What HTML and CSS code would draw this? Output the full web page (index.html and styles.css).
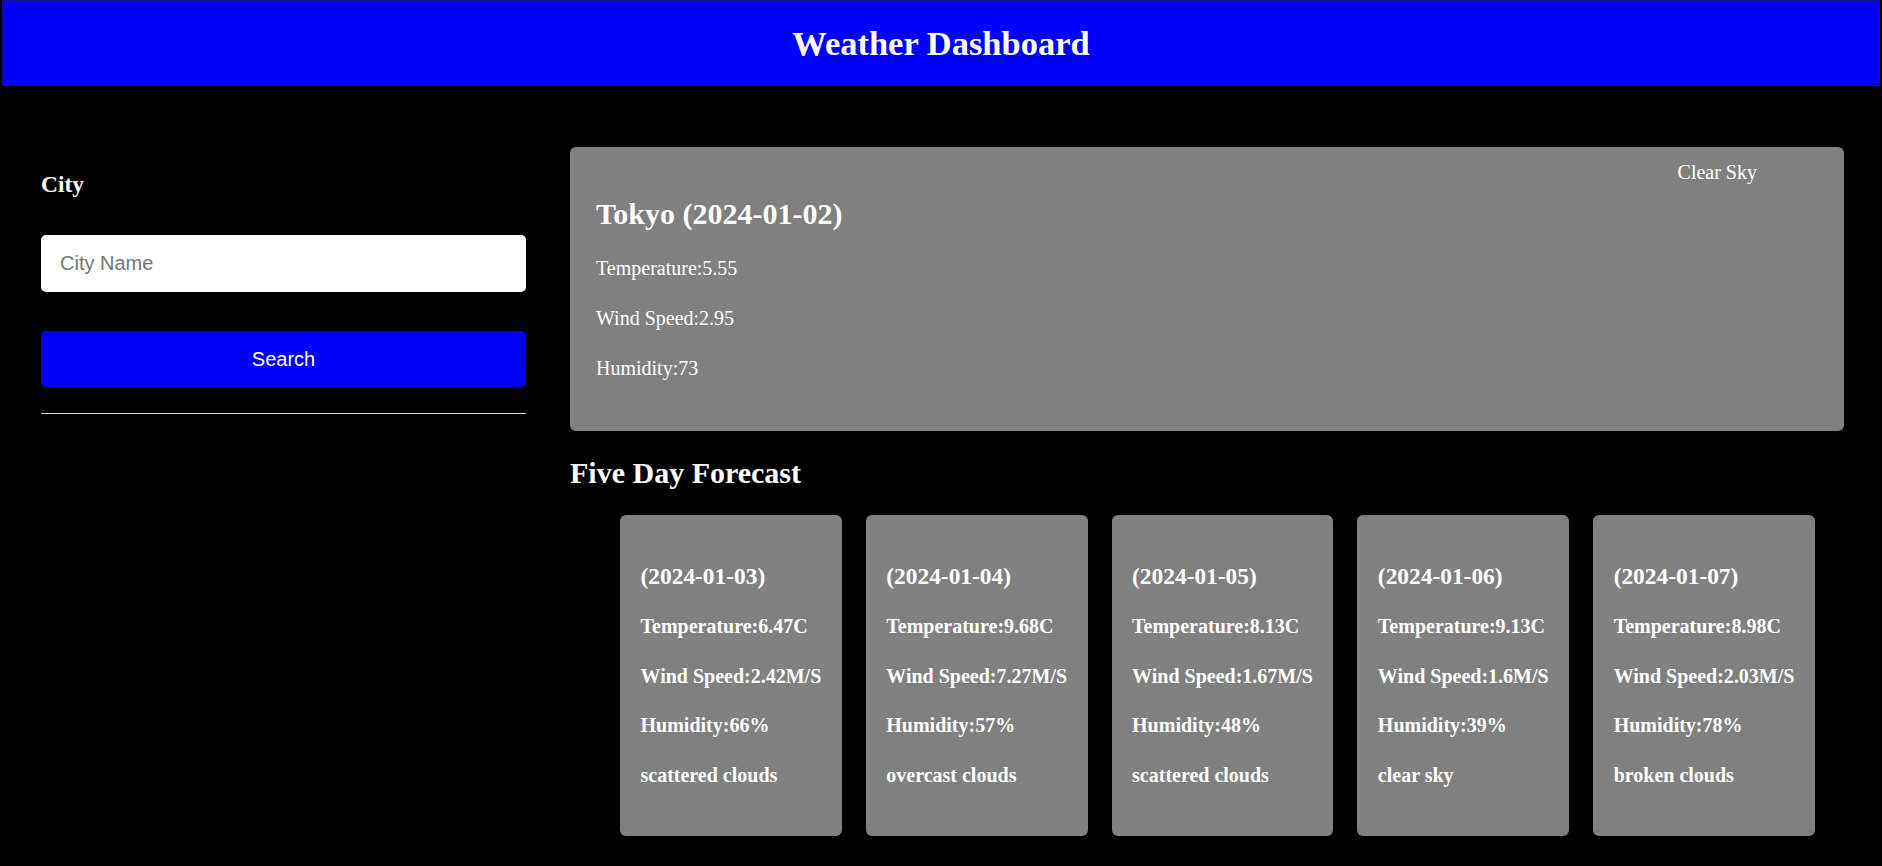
FILE: index.html
```html
<!DOCTYPE html>
<html lang="en">
<head>
<meta charset="utf-8">
<title>Weather Dashboard</title>
<link rel="stylesheet" href="styles.css">
</head>
<body>
<header class="topbar">
  <h1>Weather Dashboard</h1>
</header>
<div class="layout">
  <aside class="sidebar">
    <h3 class="label">City</h3>
    <input class="city-input" type="text" placeholder="City Name">
    <button class="search-btn" type="button">Search</button>
    <hr class="divider">
  </aside>
  <main class="main">
    <section class="current">
      <div class="current-status"><span>Clear Sky</span></div>
      <h2 class="current-title">Tokyo (2024-01-02)</h2>
      <div class="current-stats">
        <p>Temperature:5.55</p>
        <p>Wind Speed:2.95</p>
        <p>Humidity:73</p>
      </div>
    </section>
    <h2 class="forecast-title">Five Day Forecast</h2>
    <ul class="forecast">
      <li class="day">
        <h3>(2024-01-03)</h3>
        <div class="day-stats">
          <p>Temperature:6.47C</p>
          <p>Wind Speed:2.42M/S</p>
          <p>Humidity:66%</p>
          <p>scattered clouds</p>
        </div>
      </li>
      <li class="day">
        <h3>(2024-01-04)</h3>
        <div class="day-stats">
          <p>Temperature:9.68C</p>
          <p>Wind Speed:7.27M/S</p>
          <p>Humidity:57%</p>
          <p>overcast clouds</p>
        </div>
      </li>
      <li class="day">
        <h3>(2024-01-05)</h3>
        <div class="day-stats">
          <p>Temperature:8.13C</p>
          <p>Wind Speed:1.67M/S</p>
          <p>Humidity:48%</p>
          <p>scattered clouds</p>
        </div>
      </li>
      <li class="day">
        <h3>(2024-01-06)</h3>
        <div class="day-stats">
          <p>Temperature:9.13C</p>
          <p>Wind Speed:1.6M/S</p>
          <p>Humidity:39%</p>
          <p>clear sky</p>
        </div>
      </li>
      <li class="day">
        <h3>(2024-01-07)</h3>
        <div class="day-stats">
          <p>Temperature:8.98C</p>
          <p>Wind Speed:2.03M/S</p>
          <p>Humidity:78%</p>
          <p>broken clouds</p>
        </div>
      </li>
    </ul>
  </main>
</div>
</body>
</html>
```
FILE: styles.css
```css
* {
  box-sizing: border-box;
}

body {
  margin: 0;
  background: #000;
  color: #fff;
  font-family: "Liberation Serif", "Times New Roman", serif;
}

.topbar {
  margin: 0 2px;
  height: 86px;
  border: 1px solid #14148a;
  background: #0000ff;
  display: flex;
  align-items: center;
  justify-content: center;
}

.topbar h1 {
  margin: 0;
  font-size: 34.5px;
  font-weight: 700;
  line-height: 40px;
}

.layout {
  display: flex;
  align-items: flex-start;
  gap: 44px;
  padding: 61px 38px 16px 41px;
}

.sidebar {
  width: 485px;
  flex: none;
  display: flex;
  flex-direction: column;
  padding-top: 23px;
}

.label {
  margin: 0;
  font-size: 23.4px;
  line-height: 28px;
  font-weight: 700;
}

.city-input {
  margin-top: 36.6px;
  height: 57px;
  border: none;
  border-radius: 5px;
  padding: 0 19px;
  font: 20px "Liberation Sans", Arial, sans-serif;
  background: #fff;
  color: #000;
  outline: none;
}

.city-input::placeholder {
  color: #757575;
}

.search-btn {
  margin-top: 39.7px;
  height: 56px;
  border: none;
  border-radius: 5px;
  background: #0000ff;
  color: #fff;
  font: 20px "Liberation Sans", Arial, sans-serif;
}

.divider {
  margin: 25.6px 0 0;
  border: none;
  border-top: 1px solid #d8d8d8;
  height: 0;
}

.main {
  flex: 1;
  min-width: 0;
}

.current {
  background: #808080;
  border-radius: 6px;
  padding: 12.5px 26px 48.5px;
  display: flex;
  flex-direction: column;
}

.current-status {
  display: flex;
  justify-content: flex-end;
  padding-right: 61px;
  font-size: 20px;
  line-height: 24px;
}

.current-title {
  margin: 12.2px 0 0;
  font-size: 30px;
  line-height: 36px;
  font-weight: 700;
}

.current-stats {
  display: flex;
  flex-direction: column;
  gap: 20px;
  margin-top: 21.3px;
}

.current-stats p,
.day-stats p {
  margin: 0;
  font-size: 20px;
  line-height: 30px;
}

.forecast-title {
  margin: 24px 0 23.5px;
  font-size: 30px;
  line-height: 36px;
  font-weight: 700;
}

.forecast {
  list-style: none;
  margin: 0;
  padding: 0 0 0 50px;
  display: flex;
  gap: 24px;
}

.day {
  background: #808080;
  border-radius: 6px;
  padding: 47px 20.5px 46.5px;
  display: flex;
  flex-direction: column;
  font-weight: 700;
}

.day h3 {
  margin: 0;
  font-size: 23.4px;
  line-height: 28px;
  font-weight: 700;
}

.day-stats {
  display: flex;
  flex-direction: column;
  gap: 19.5px;
  margin-top: 21.2px;
}
```
